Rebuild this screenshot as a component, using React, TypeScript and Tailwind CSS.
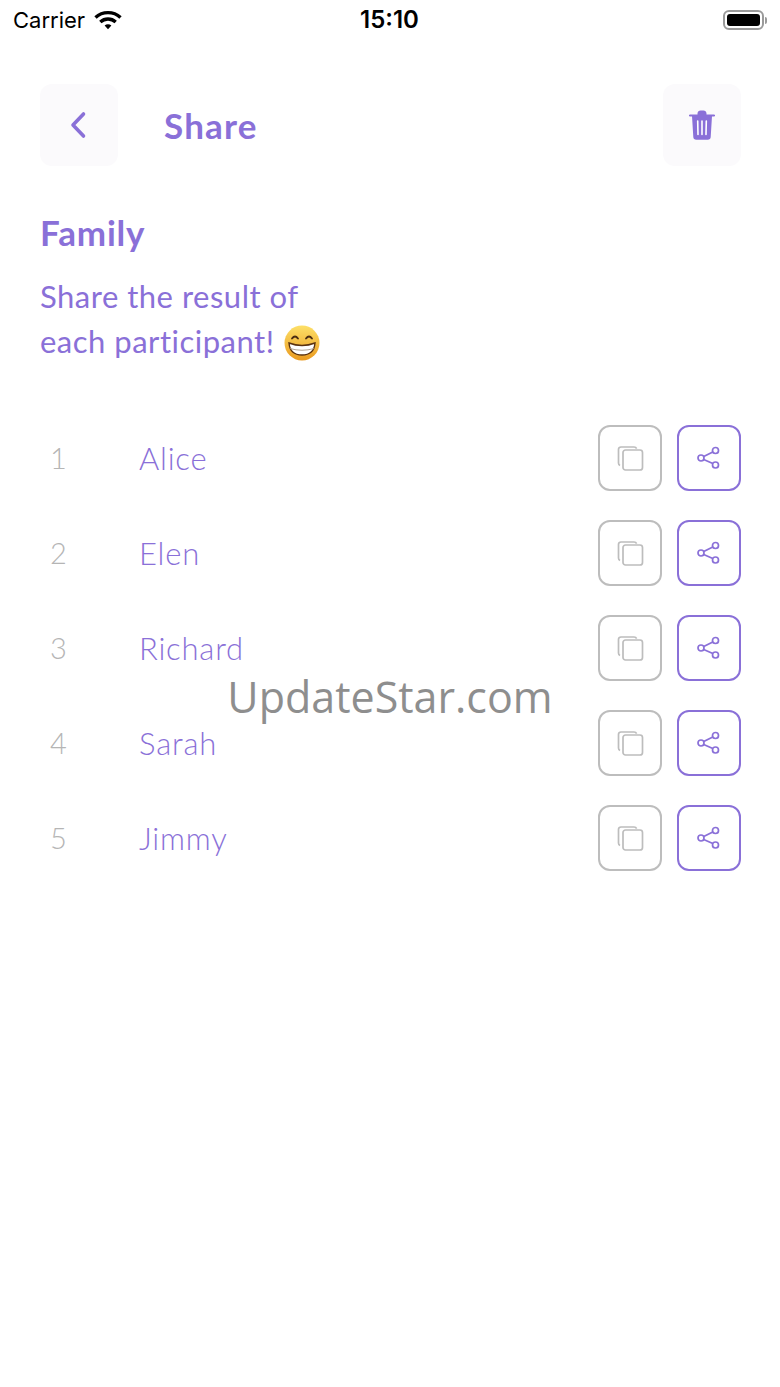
const participants = ['Alice', 'Elen', 'Richard', 'Sarah', 'Jimmy']

const body = "font-['Lato',sans-serif]"

function GrinEmoji() {
  return (
    <svg width="38" height="38" viewBox="0 0 38 38" className="inline-block align-[1px] -my-[10px]">
      <defs>
        <linearGradient id="face" x1="0" y1="0" x2="0" y2="1">
          <stop offset="0" stopColor="#fde068" />
          <stop offset="1" stopColor="#ea9a1e" />
        </linearGradient>
      </defs>
      <circle cx="19" cy="19" r="17.5" fill="url(#face)" />
      <path d="M9 14.5q3-4 6 0M23 14.5q3-4 6 0" fill="none" stroke="#4a2c12" strokeWidth="1.8" strokeLinecap="round" />
      <path d="M6 19q13 5 26 0q-1 12-13 12T6 19z" fill="#fff" stroke="#5a3210" strokeWidth="1.4" />
      <path d="M7 24.5q12 3.5 24 0" fill="none" stroke="#a89a88" strokeWidth="0.9" />
    </svg>
  )
}

function WifiIcon() {
  return (
    <svg width="28" height="20" viewBox="0 0 28 20" fill="none">
      <path d="M1.5 7.5C8.5 1 19.5 1 26.5 7.5" stroke="#000" strokeWidth="3.4" />
      <path d="M6.3 12C10.8 8 17.2 8 21.7 12" stroke="#000" strokeWidth="3.4" />
      <path d="M10.6 15.5L14 19.2l3.4-3.7c-2-1.7-4.8-1.7-6.8 0z" fill="#000" />
    </svg>
  )
}

function TrashIcon() {
  return (
    <svg width="26" height="30" viewBox="0 0 26 30">
      <path d="M8.500 4.500V3.500C8.500 1.500 10 .5 11.500 .5h3C16 .5 17.500 1.500 17.500 3.500v1h7.600a.9.9 0 010 2H.9a.9.9 0 010-2z" fill="#8a70d8" />
      <path d="M3 6h20l-1.300 21c-.1 1.700-1.200 2.800-3 2.800H7.300c-1.800 0-2.900-1.100-3-2.800z" fill="#8a70d8" />
      <path d="M8.700 11l.3 13.500M13 11v13.500M17.300 11L17 24.500" stroke="#fff" strokeWidth="1.600" strokeLinecap="round" />
    </svg>
  )
}

function CopyIcon() {
  return (
    <svg width="30" height="30" viewBox="0 0 30 30" fill="none" stroke="#bdbdbd" strokeWidth="1.7">
      <path d="M5 22.500c-1-.5-1.500-1.300-1.500-2.500V6.500c0-1.600 1-2.500 2.500-2.500h13c1.400 0 2.200.6 2.600 1.600" />
      <rect x="8" y="7" width="19.500" height="20" rx="2.500" />
    </svg>
  )
}

function ShareIcon() {
  return (
    <svg width="26" height="26" viewBox="0 0 26 26" fill="none" stroke="#8a70d8" strokeWidth="1.7">
      <circle cx="19.500" cy="5.500" r="3" />
      <circle cx="5" cy="13" r="3" />
      <circle cx="19.500" cy="20" r="3" />
      <path d="M7.700 11.600l9.100-4.700M7.700 14.400l9.100 4.200" />
    </svg>
  )
}

export default function App() {
  return (
    <div className={`relative w-[780px] h-[1387px] bg-white overflow-hidden ${body}`}>
      <div className="flex items-center h-[40px] px-[13px] font-['Inter',sans-serif] text-black">
        <div className="flex items-center gap-[9px] w-[348px]">
          <span className="text-[22px]">Carrier</span>
          <WifiIcon />
        </div>
        <span className="text-[24px] font-semibold w-[364px]">15:10</span>
        <div className="flex items-center">
          <div className="w-[41px] h-[20px] rounded-[6px] border-2 border-[#9a9a9a] p-[2px]">
            <div className="w-full h-full rounded-[3px] bg-black" />
          </div>
          <div className="w-[2px] h-[7px] rounded-r bg-[#9a9a9a] ml-[1px]" />
        </div>
      </div>

      <div className="pl-[40px] pr-[39px]">
        <div className="flex items-center justify-between mt-[44px]">
          <div className="flex items-center gap-[46px]">
            <button className="w-[78px] h-[82px] rounded-[12px] bg-[#fbfafc] flex items-center justify-center">
              <svg width="20" height="30" viewBox="0 0 20 30" fill="none" stroke="#8a70d8" strokeWidth="3.6" strokeLinecap="round" strokeLinejoin="round" className="-ml-[3px]">
                <path d="M15.500 4L5 15l10.500 11" />
              </svg>
            </button>
            <h1 className="text-[35px] font-bold text-[#8a70d8] leading-none tracking-[1.200px]">Share</h1>
          </div>
          <button className="w-[78px] h-[82px] rounded-[12px] bg-[#fbfafc] flex items-center justify-center">
            <TrashIcon />
          </button>
        </div>

        <h2 className="mt-[46px] text-[35px] font-bold text-[#8a70d8] leading-[40px] tracking-[0.800px]">Family</h2>
        <p className="mt-[22px] text-[31px] text-[#8a70d8] leading-[45px] tracking-[0.500px]">
          Share the result of
          <br />
          each participant! <GrinEmoji />
        </p>

        <div className="mt-[61px] flex flex-col gap-[29px]">
          {participants.map((name, index) => (
            <div key={name} className="flex items-center h-[66px]">
              <span className="w-[99px] pl-[10px] text-[29px] font-light text-[#b5b5b5]">{index + 1}</span>
              <span className="flex-1 text-[31px] font-light text-[#8a70d8] tracking-[0.800px]">{name}</span>
              <div className="flex gap-[15px]">
                <button className="w-[64px] h-[66px] rounded-[12px] border-2 border-[#bdbdbd] flex items-center justify-center">
                  <CopyIcon />
                </button>
                <button className="w-[64px] h-[66px] rounded-[12px] border-2 border-[#8a70d8] flex items-center justify-center">
                  <ShareIcon />
                </button>
              </div>
            </div>
          ))}
        </div>
      </div>

      <div className="absolute left-0 right-0 top-[670px] text-center text-[43px] leading-[54px] text-[#8e8e8e] font-['Open_Sans',sans-serif]">
        UpdateStar.com
      </div>
    </div>
  )
}
